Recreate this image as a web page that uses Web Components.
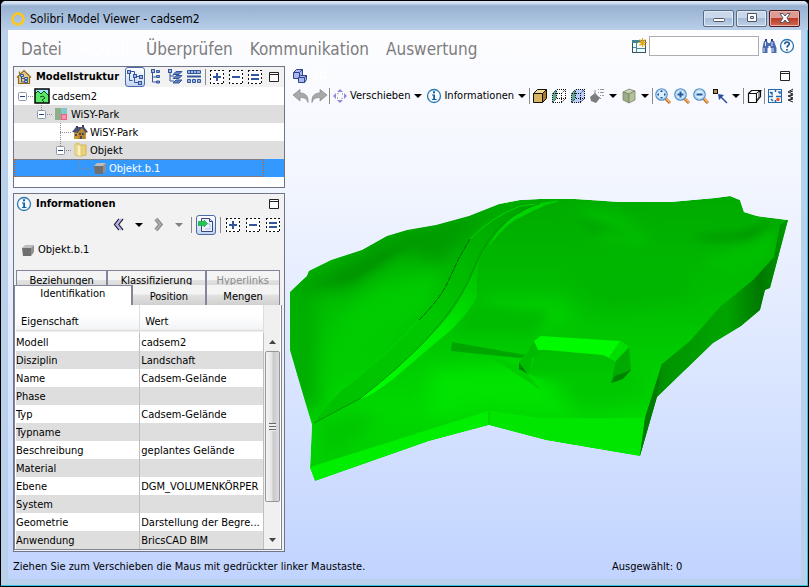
<!DOCTYPE html>
<html lang="de">
<head>
<meta charset="utf-8">
<title>Solibri Model Viewer - cadsem2</title>
<style>
html,body{margin:0;height:100%;background:#000}
body{font:11px/14px "DejaVu Sans Condensed","DejaVu Sans",sans-serif;color:#000}
</style>
</head>
<body>
<app-window></app-window>
<script>
const box = (inner) => `<rect x="1.5" y="1.5" width="13" height="13" fill="#fff" stroke="#111" stroke-dasharray="2 2" stroke-dashoffset="1" shape-rendering="crispEdges"/><g fill="#34569c">${inner}</g>`;
const lens = (inner) => `<path d="M10 10l5 5" stroke="#b86a2c" stroke-width="3"/><path d="M10.500 10l4.500 4.500" stroke="#ffb45c" stroke-width="1.500"/><circle cx="6.500" cy="6.500" r="5.700" fill="#d9efff" stroke="#5c93c6" stroke-width="1.300"/><circle cx="6.500" cy="6.500" r="4.400" fill="none" stroke="#a9d6f5"/><g fill="#27599a">${inner}</g>`;
const cube = (f, t, s, k) => `<g stroke="${k}" stroke-linejoin="round"><path d="M1.500 5.500h9v9h-9z" fill="${f}"/><path d="M1.500 5.500l4-4h9l-4 4z" fill="${t}"/><path d="M10.500 5.500l4-4v9l-4 4z" fill="${s}"/></g>`;
const dotted = (f) => `<path d="M1.500 5.500l4-4h9v9l-4 4h-9z" fill="${f}"/><path d="M1.500 5.500l4-4v9l-4 4z" fill="#5fa893"/><path d="M1.500 5.500h9v9h-9zM5.500 1.500h9v9h-9z" fill="none" stroke="#111" stroke-dasharray="1 1" shape-rendering="crispEdges"/><path d="M1.500 5.500l4-4M10.500 5.500l4-4M10.500 14.500l4-4M1.500 14.500l4-4" fill="none" stroke="#111" stroke-dasharray="1 1"/>`;
const info = `<circle cx="8" cy="8" r="6.500" fill="#f4faff" stroke="#2d78b0" stroke-width="1.300"/><path d="M6 6.500h3V11h1.500v1H6v-1h1.200V7.500H6zM7 3.200h2v2H7z" fill="#176099"/>`;
const node = (x, y) => `<rect x="${x}.500" y="${y}.500" width="3" height="3" fill="#9fb9e6" stroke="#34569c"/>`;
const greyCube = `<path d="M3 6l3-3h9l-3 3z" fill="#bdbdbd"/><path d="M12 6l3-3v7l-3 4z" fill="#909090"/><path d="M3 6h9v8H4z" fill="#6f6f6f"/>`;
const ICONS = {
 ring:`<circle cx="8" cy="8" r="5.500" fill="none" stroke="#ffc814" stroke-width="2.500"/>`,
 home:`<path d="M2 8l6-6 6 6v7H2z" fill="#e9cb82"/><path d="M1 8.500L8 1.500l7 7M2.500 8v6.500h11V8M3.500 5V2.500" fill="none" stroke="#8a6a20" stroke-width="1.200"/><path d="M5.500 6v7h3M5.500 9.500h3" fill="none" stroke="#34569c"/><path d="M4.500 5.500h3v2h-3zM8.500 8.500h3v2h-3zM8.500 11.500h3v2h-3z" fill="#b8d2f8" stroke="#34569c"/>`,
 tree1:`<path d="M2.500 4v7.500h3M4 2.500h3.500V6M7.500 8v5.500h4M9 7.500h4" fill="none" stroke="#34569c"/>${node(0,1)}${node(6,5)}${node(12,6)}${node(11,12)}`,
 tree2:`<path d="M4.500 4v9h4M4.500 8h4" fill="none" stroke="#34569c"/>${node(3,0)}<path d="M8.500 1.500h3v2h-3zM8.500 6.500h3v2h-3zM8.500 12h3v2h-3z" fill="#7b9bd4" stroke="#34569c"/>`,
 tree3:`<path d="M3 3v9h4M3 7h4" fill="none" stroke="#34569c"/>${node(1,0)}<path d="M6 5.500l3-3h6l-3 3zM6 9.500l3-3h6l-3 3zM6 14l3-3h6l-3 3z" fill="#6482b9" stroke="#34569c"/>`,
 rows:`<path d="M1.500 1.500h13v3h-13zM1.500 10.500h3v3h-3zM6.500 10.500h3v3h-3zM11.500 10.500h3v3h-3z" fill="#9db6e0" stroke="#34569c"/><path d="M1 7.500h14" stroke="#34569c" stroke-width="2"/><path d="M4.500 2v2M7.500 2v2M10.500 2v2" stroke="#34569c"/>`,
 plus:box(`<path d="M7 4h2v3h3v2H9v3H7V9H4V7h3z"/>`),
 minus:box(`<path d="M4 7h8v2H4z"/>`),
 equal:box(`<path d="M4 5h8v2H4zM4 9h8v2H4z"/>`),
 max:`<path d="M3.500 3.500h9v9h-9zM3 5.500h10" fill="#fff" stroke="#222"/>`,
 land:`<rect x="1" y="1" width="14" height="14" fill="#9ee8ff"/><path d="M1 6l3-3 3 3 3-3 5 5v7H1z" fill="#5be868"/><path d="M1 6l3-3 3 3 3-3 5 5M6 9l3-1 2 2-3 2 2 2" fill="none" stroke="#064d12"/><rect x="1" y="1" width="14" height="14" fill="none" stroke="#000" stroke-width="1.500"/>`,
 site:`<rect x="2" y="2" width="12" height="12" fill="#8fae8c"/><path d="M8 2h6v6H8z" fill="#7dcaca"/><path d="M8 8h6v6H8z" fill="#ff8faf"/><path d="M8.500 8.500h5v5h-5z" fill="none" stroke="#e42a5c" stroke-dasharray="1 1"/>`,
 house:`<path d="M2 7h12v8H2z" fill="#c79a34"/><path d="M0 8l4-5h8l4 5-3 1-3-4-4 4z" fill="#485070"/><path d="M6 8l4-4 3 4v7H6z" fill="#b5872a"/><path d="M3 10h2v2H3zM7 9h2v2H7zM10 9h2v2h-2zM8 12h2v3H8z" fill="#51485c"/><path d="M4 2h2v2H4zM10 1h2v2h-2z" fill="#394056"/>`,
 folder:`<path d="M3 2l4-1v13l-4-1z" fill="#f8e9a4" stroke="#d6bf6a"/><path d="M8 3h6v10l-6 1z" fill="#ebd27a" stroke="#cfb656"/><path d="M5 2l4 2v11l-4-2z" fill="#fdf3bd" stroke="#dbc673"/>`,
 obj:greyCube, info,
 back:`<path d="M8 2L3.500 7.500 8 13M12 2L7.500 7.500 12 13" fill="none" stroke="#20202c" stroke-width="1.300"/><path d="M10 2L5.500 7.500 10 13" fill="none" stroke="#b5b3ee" stroke-width="2"/>`,
 fwd:`<path d="M5 2l4.500 5.500L5 13" fill="none" stroke="#8a8a8a" stroke-width="4"/><path d="M5 2l4.500 5.500L5 13" fill="none" stroke="#b0b0b0" stroke-width="1.500"/>`,
 doc:`<path d="M3.500 14.500V1.500h8l3 3v10z" fill="#eef2ff" stroke="#39477a"/><path d="M11.500 1.500v3h3" stroke="#39477a" fill="#c6d0ff"/><path d="M9 7h3v5H7" stroke="#b4bde8" fill="none"/><path d="M0 4.500h6V3l3.500 3.500L6 10V8.500H0z" fill="#23c653" stroke="#0c9a40" stroke-width=".6"/>`,
 blocks:`<g fill="#aab6f2" stroke="#2e4589"><path d="M1.500 4.500l3-3h6v6l-3 3h-6zM1.500 4.500h6v6M7.500 4.500l3-3"/><path d="M6.500 9.500l2-2h6v4l-2 3h-6zM6.500 9.500h6v5M12.500 9.500l2-2"/></g>`,
 undo:`<path d="M0 7l7-5.500V5c6 0 8.500 3.500 8 9.500-1-3.500-3-5-8-5V13z" fill="#a8a8a8" stroke="#858585" stroke-width=".7"/>`,
 redo:`<path d="M16 7L9 1.500V5C3 5 .5 8.500 1 14.500c1-3.500 3-5 8-5V13z" fill="#a8a8a8" stroke="#858585" stroke-width=".7"/>`,
 move:`<path d="M8 1l3 3H5zM8 15l3-3H5zM1 8l3-3v6zM15 8l-3-3v6z" fill="#8b8ade"/><path d="M5.500 5.500h5v5h-5z" fill="none" stroke="#777" stroke-dasharray="1 4"/>`,
 cube:cube('#d9b566','#f3da94','#a77c32','#171208'),
 dot1:dotted('#fff'), dot2:dotted('#b9ceff'),
 paint:`<path d="M1 9l5-4 5 5-4 5-5-2z" fill="#7d7d7d"/><path d="M6 2v6M10 9l2 2" stroke="#888" fill="none"/><path d="M9 1.500h1m1 0h4M9 4.500h1m1 0h4M11 7.500h1m1 0h2" stroke="#999"/>`,
 green:`<g stroke="#78866a" stroke-width=".8"><path d="M2 4l6-3 6 2-6 3z" fill="#c8d3b0"/><path d="M2 4l6 2v9l-6-3z" fill="#9dad85"/><path d="M8 6l6-3v9l-6 3z" fill="#b3c299"/></g>`,
 fit:lens(`<path d="M6.500 2L8 4H5zM6.500 11L8 9H5zM2 6.500L4 5v3zM11 6.500L9 5v3z"/>`),
 zin:lens(`<path d="M5.500 3.500h2v2h2v2h-2v2h-2v-2h-2v-2h2z"/>`),
 zout:lens(`<path d="M3.500 5.500h6v2h-6z"/>`),
 pick:`<rect x="1.500" y="1.500" width="4" height="4" fill="#b4944e" stroke="#111"/><path d="M15 15L8 8" stroke="#2b4f9d" stroke-width="1.500"/><path d="M6 6l6 1-5 5z" fill="#2b4f9d"/>`,
 wire:`<path d="M2.500 5.500h8v9h-8zM2.500 5.500l3-3h9l-4 3M14.500 2.500v6l-4 5" fill="#fff" stroke="#111" stroke-width="1.200"/><path d="M11 5l2-2v6l-2 3" fill="#fff" stroke="#111" stroke-width=".8"/>`,
 plan:`<rect x="1.500" y="1.500" width="13" height="13" fill="#f4f8ff" stroke="#2768ad"/><path d="M1 8.500h5M9 8.500h6M8.500 1v3M8.500 12v3M3 4l2 2V4M11 4h2v2M4 11l2 2" fill="none" stroke="#2768ad" stroke-width="1.500"/><circle cx="11" cy="11.500" r="1.800" fill="#f05d26"/>`,
 coil:`<path d="M7 1L2 4l5 2-5 2 5 2-5 2 5 2M7 3L4 4M7 7L4 8M7 11l-3 1" stroke="#222" fill="none"/>`,
 layout:`<rect x="1.500" y="2.500" width="13" height="12" fill="#eefafa" stroke="#315362"/><path d="M1 2h9v3H1z" fill="#3f8796"/><path d="M5.500 5v9M2 9.500h3M6 10.500h8" stroke="#4d8b9a"/><path d="M11.500 0v9M7 4.500h9M8.500 1.500l6 6M14.500 1.500l-6 6" stroke="#e6a91b" stroke-width="1.200"/>`,
 find:`<path d="M3 3h3l1 2h2l1-2h3l2.500 7v5h-5v-5h-1v-2h-2v2h-1v5h-5v-5z" fill="#4c6cae"/><path d="M4 1h2v2H4zM10 1h2v2h-2z" fill="#213d7c"/><path d="M3 10v4M12 10v4M4.500 4v4M11 4v4" stroke="#d8e5ff"/>`,
 help:`<circle cx="8" cy="8" r="6.500" fill="#f8fcff" stroke="#2d78b0" stroke-width="1.300"/><path d="M5.800 6.200C5.800 3.200 10.500 3.400 10.300 6 10.200 7.500 8 7.500 8 9.500M8 11v1.600" fill="none" stroke="#174f88" stroke-width="1.600"/>`,
 caret:`<path d="M4 6h8l-4 4z" fill="currentColor"/>`
};
function define(name, css, html){
  const tpl = document.createElement('template');
  customElements.define(name, class extends HTMLElement{
    connectedCallback(){
      if (this.shadowRoot) return;
      tpl.innerHTML = `<style>*{box-sizing:border-box}button{font:inherit;color:inherit;margin:0;padding:0;border:0;background:none}${css}</style>${typeof html === 'function' ? html(this) : html}`;
      this.attachShadow({mode:'open'}).append(tpl.content.cloneNode(true));
    }
  });
}
define('ui-icon', ':host{display:block;flex:none;width:16px;height:16px}svg{display:block;width:100%;height:100%}',
  el => `<svg viewBox="0 0 16 16" aria-hidden="true">${ICONS[el.getAttribute('name')]}</svg>`);
define('tool-button', `:host{display:block;flex:none}button{display:flex;align-items:center;gap:2px;white-space:nowrap}
  :host([active]) button{padding:1px;border:1px solid #4a6ba5;border-radius:3px;background:linear-gradient(#fff,#c3d4f1)}`,
  el => `<button type="button" aria-label="${el.getAttribute('label')}"><ui-icon name="${el.getAttribute('icon')}"></ui-icon><slot></slot></button>`);
define('drop-arrow', ':host{display:block;flex:none;width:16px}button{display:block}', '<button type="button" aria-label="Auswahl"><ui-icon name="caret"></ui-icon></button>');
define('tool-sep', ':host{display:block;flex:none;width:1px;height:16px;background:#8a8a8a}', '');

define('window-button', `:host{display:block;width:31px;height:17px}
  button{display:grid;place-items:center;width:100%;height:100%;border:1px solid #5b6b82;border-radius:2px;background:linear-gradient(#c9d8eb 0 45%,#a5bcd8 50%,#bed1e7);box-shadow:inset 0 0 0 1px #e2ebf5}
  :host([kind=close]) button{border-color:#4e1a20;background:linear-gradient(#dd9c93 0 45%,#bd3b28 50%,#cf6a4e);box-shadow:inset 0 0 0 1px #e7b2a9}
  svg{display:block;width:14px;height:12px}`,
  el => { const k = el.getAttribute('kind');
    const p = {min:'<rect x="1.500" y="6.500" width="11" height="3" rx="1" fill="#fff" stroke="#535666"/>',
      max:'<path d="M2.500 1.500h9v8h-9zM5.500 4.500h3v2h-3z" fill="#fff" fill-rule="evenodd" stroke="#535666"/>',
      close:'<path d="M2 1.500h3l2 2.500 2-2.500h3L9 6l3 4.500H9L7 8l-2 2.500H2L5 6z" fill="#fff" stroke="#535666"/>'}[k];
    return `<button type="button" aria-label="${el.getAttribute('label')}"><svg viewBox="0 0 14 12">${p}</svg></button>`; });
define('title-bar', `:host{display:flex;align-items:center;height:30px;padding:2px 8px 0 9px;gap:4px;background:linear-gradient(#d4e2f2 0 2px,#97b1d1 5px,#bad0ea)}
  .t{flex:1;font:12px/16px "DejaVu Sans Condensed","DejaVu Sans",sans-serif;padding-top:3px}
  .b{display:flex;gap:2px;padding-top:2px}ui-icon{margin-top:4px}`,
  `<ui-icon name="ring"></ui-icon><span class="t">Solibri Model Viewer - cadsem2</span>
  <div class="b"><window-button kind="min" label="Minimieren"></window-button><window-button kind="max" label="Maximieren"></window-button><window-button kind="close" label="Schließen"></window-button></div>`);
define('menu-bar', `:host{display:flex;align-items:center;height:36px;padding:0 6px 0 13px}
  nav{display:flex;gap:17px;flex:1;font:17px/24px "DejaVu Sans Condensed","DejaVu Sans",sans-serif;color:#7d7d7d;padding-top:1px}
  a{color:inherit;text-decoration:none}.on{color:#fff}
  .s{display:flex;align-items:center;gap:2px;padding-bottom:4px}
  input{width:110px;height:20px;border:1px solid #abadb3;background:#fff;padding:0 3px;font:inherit}`,
  `<nav><a href="#d">Datei</a><a href="#m" class="on">Modell</a><a href="#u">Überprüfen</a><a href="#k">Kommunikation</a><a href="#a">Auswertung</a></nav>
  <div class="s"><tool-button icon="layout" label="Layout"></tool-button><input type="text" aria-label="Suche"><tool-button icon="find" label="Suchen"></tool-button><tool-button icon="help" label="Hilfe"></tool-button></div>`);

define('tool-panel', `:host{display:flex;flex-direction:column;border:1px solid #6f7487;background:#f2f2f2;min-height:0}
  header{display:flex;align-items:center;height:20px;padding:0 2px;gap:4px;flex:none}
  h2{margin:0;font:bold 11px/14px "DejaVu Sans Condensed","DejaVu Sans",sans-serif;flex:1;white-space:nowrap}
  .tools{display:flex;align-items:center;gap:3px}`,
  el => `<header><ui-icon name="${el.getAttribute('icon')}"></ui-icon><h2>${el.getAttribute('heading')}</h2><div class="tools"><slot name="tools"></slot><tool-button icon="max" label="Maximieren"></tool-button></div></header><slot></slot>`);
define('tree-row', `:host{display:flex;align-items:center;height:18px;background:#fff}
  :host([alt]){background:#dedede}
  :host([selected]){background:#3399ff;color:#fff}
  .f{flex:1;display:flex;align-items:center;height:18px;margin-right:20px}
  .f span{padding:1px 0 0 2px}
  :host([selected]) .f{outline:1px dotted #c86410;outline-offset:-1px}
  svg{display:block;flex:none;height:18px}`,
  el => { const d = +el.getAttribute('depth'), leaf = el.hasAttribute('leaf'), w = 20 + d * 19, x = 4 + d * 19;
    let s = `<g fill="none" stroke="#8a8a8a" stroke-dasharray="1 1">`;
    if (d) s += `<path d="M${x + 4.5} 0V${leaf && d === 2 ? 18 : 9}"/>`;
    s += `<path d="M${x + 4} 9.500H${w}"/></g>`;
    if (!leaf) s += `<rect x="${x + .5}" y="5.500" width="8" height="8" rx="1" fill="#fff" stroke="#8c98a8"/><path d="M${x + 2} 9.500h5" stroke="#24408c"/>`;
    return `<div class="f"><svg width="${w}" viewBox="0 0 ${w} 18">${s}</svg><ui-icon name="${el.getAttribute('icon')}"></ui-icon><span><slot></slot></span></div>`; });
define('tree-view', ':host{display:block;background:#fff;flex:1}',
  `<tree-row depth="0" icon="land">cadsem2</tree-row><tree-row depth="1" icon="site" alt>WiSY-Park</tree-row><tree-row depth="2" icon="house" leaf>WiSY-Park</tree-row><tree-row depth="2" icon="folder" alt>Objekt</tree-row><tree-row depth="3" icon="obj" leaf selected>Objekt.b.1</tree-row>`);

define('tab-strip', `:host{display:block;padding:0 4px 0 2px;flex:none}
  .r{display:grid;border:1px solid #83869a;border-width:1px 1px 0;gap:2px;background:#83869a}
  .a{grid-template-columns:90fr 97fr 73fr;height:15px;overflow:hidden}
  .b{grid-template-columns:117fr 73fr 72fr;height:20px;border-width:0 1px 1px 0;margin-left:-2px}
  button{height:100%;background:linear-gradient(#f4f4f4 0 45%,#e2e2e2 50%,#d0d0d0)}
  .a button{height:19px}.b button{padding-top:3px}
  .b .sel{height:20px;background:#fff;border:1px solid #83869a;border-width:1px 0 0 1px;padding:0 0 3px}
  [disabled]{color:#8c8c8c}`,
  `<div class="r a"><button>Beziehungen</button><button>Klassifizierung</button><button disabled>Hyperlinks</button></div>
  <div class="r b"><button class="sel">Identifikation</button><button>Position</button><button>Mengen</button></div>`);
const ROWS = [['Modell','cadsem2'],['Disziplin','Landschaft'],['Name','Cadsem-Gelände'],['Phase',''],['Typ','Cadsem-Gelände'],['Typname',''],['Beschreibung','geplantes Gelände'],['Material',''],['Ebene','DGM_VOLUMENKÖRPER'],['System',''],['Geometrie','Darstellung der Begre...'],['Anwendung','BricsCAD BIM']];
define('scroll-bar', `:host{display:flex;flex-direction:column;width:15px;background:#f0f0f0}
  button{height:18px;display:grid;place-items:center;color:#444}
  .track{flex:1}
  .thumb{height:84%;border:1px solid #969696;border-radius:2px;background:linear-gradient(90deg,#f6f6f6,#e4e4e4 45%,#c9c9cc 55%,#dcdcdf);display:grid;place-items:center}
  .grip{width:7px;height:8px;background:repeating-linear-gradient(#666 0 1px,#eee 1px 3px)}
  svg{display:block}`,
  `<button type="button" aria-label="Nach oben"><svg width="7" height="4"><path d="M0 4h7L3.500 0z" fill="currentColor"/></svg></button><div class="track"><div class="thumb"><div class="grip"></div></div></div><button type="button" aria-label="Nach unten"><svg width="7" height="4"><path d="M0 0h7L3.500 4z" fill="currentColor"/></svg></button>`);
define('property-table', `:host{display:flex;flex:1;min-height:0;border:1px solid #83869a;border-top:0;margin-right:2px;margin-bottom:1px;background:#fff;padding:0 1px}
  table{flex:1;border-collapse:collapse;table-layout:fixed;width:0;height:min-content}
  th{height:28px;font-weight:normal;text-align:left;padding:5px 5px 0;background:linear-gradient(#fff 0 10px,#f3f4f6 24px,#d8d8d8 26px,#fff 27px);border-right:1px solid #ddd}
  td{height:18px;padding:1px 0 0;white-space:nowrap;border-right:1px solid #bfbfbf;line-height:14px}
  td+td{padding-left:1px}tbody tr:nth-child(even){background:#dedede}
  .side{display:flex;flex-direction:column;padding:28px 0 0 1px;background:#f0f0f0}scroll-bar{flex:1}`,
  `<table><thead><tr><th>Eigenschaft</th><th>Wert</th></tr></thead><tbody>${ROWS.map(r => `<tr><td>${r[0]}</td><td>${r[1]}</td></tr>`).join('')}</tbody></table><div class="side"><scroll-bar></scroll-bar></div>`);
define('info-panel', `:host{display:flex;flex-direction:column;flex:1;min-height:0}
  .nav{display:flex;align-items:center;justify-content:flex-end;height:22px;gap:4px;padding-right:3px;flex:none}
  .grey{color:#808080}
  .obj{display:flex;align-items:center;gap:3px;height:27px;padding:0 5px;margin-bottom:7px;flex:none}`,
  `<div class="nav"><tool-button icon="back" label="Zurück"></tool-button><drop-arrow></drop-arrow><tool-button icon="fwd" label="Vorwärts"></tool-button><drop-arrow class="grey"></drop-arrow><tool-sep></tool-sep><tool-button icon="doc" active label="Automatisch"></tool-button><tool-sep></tool-sep><tool-button icon="plus" label="Hinzufügen"></tool-button><tool-button icon="minus" label="Entfernen"></tool-button><tool-button icon="equal" label="Setzen"></tool-button></div>
  <div class="obj"><ui-icon name="obj"></ui-icon><span>Objekt.b.1</span></div><tab-strip></tab-strip><property-table></property-table>`);

define('terrain-view', ':host{display:block;flex:1;min-height:0}svg{display:block;width:100%;height:100%}',
`<svg viewBox="286 107 515 448" role="img" aria-label="Geländemodell"><defs>
<path id="out" d="M290 292L307 276 309 271 331 260 362 250 387 236 407 230 436 225 469 216 499 204 520 200 540 199 575 199 620 202 670 202 715 198 730 196 740 200 744 212 757 216 788 220 770 288 765 290 760 310 741 326 713 343 657 397 640 456 546 440 489 425 429 441 315 481 310 468 312 425 290 350z"/>
<clipPath id="c"><use href="#out"/></clipPath>
<linearGradient id="base" x1="0" y1="0" x2="0" y2="1"><stop offset="0" stop-color="#00aa00"/><stop offset=".4" stop-color="#00c000"/><stop offset=".75" stop-color="#00d800"/><stop offset="1" stop-color="#00cc00"/></linearGradient>
<linearGradient id="side" x1="640" y1="0" x2="785" y2="0" gradientUnits="userSpaceOnUse"><stop offset="0" stop-color="#007c00"/><stop offset=".2" stop-color="#009600"/><stop offset=".6" stop-color="#00a400"/><stop offset=".83" stop-color="#007800"/><stop offset="1" stop-color="#009800"/></linearGradient>
<linearGradient id="road" x1="320" y1="420" x2="520" y2="205" gradientUnits="userSpaceOnUse"><stop offset="0" stop-color="#00c200"/><stop offset=".5" stop-color="#00c800"/><stop offset="1" stop-color="#00a400"/></linearGradient>
<linearGradient id="lit" x1="361" y1="400" x2="480" y2="270" gradientUnits="userSpaceOnUse"><stop offset="0" stop-color="#00ff00"/><stop offset=".6" stop-color="#00ec00"/><stop offset="1" stop-color="#00c000"/></linearGradient>
<linearGradient id="floor" x1="0" y1="350" x2="0" y2="384" gradientUnits="userSpaceOnUse"><stop offset="0" stop-color="#00c000"/><stop offset=".6" stop-color="#00c400"/><stop offset="1" stop-color="#00c800" stop-opacity="0"/></linearGradient>
<filter id="s" x="-50%" y="-50%" width="200%" height="200%"><feGaussianBlur stdDeviation="9"/></filter>
<filter id="s2" x="-50%" y="-50%" width="200%" height="200%"><feGaussianBlur stdDeviation="4"/></filter></defs>
<g clip-path="url(#c)"><use href="#out" fill="url(#base)"/>
<g filter="url(#s)"><path d="M285 250h30l5 170-35-30z" fill="#00ad00"/><path d="M290 290L380 235 500 205 440 265 400 250 350 290z" fill="#009c00"/><path d="M370 290L440 270 430 310 360 360 320 400 340 320z" fill="#00cc00"/><path d="M560 270L680 260 700 300 600 310z" fill="#00b600"/><path d="M430 370L520 365 560 395 570 410 480 405 430 420z" fill="#00e400"/><path d="M560 372L640 360 650 400 590 412 560 395z" fill="#00c800"/><path d="M315 430L350 410 380 420 330 460z" fill="#00c600"/><path d="M480 320L490 300 560 300 580 320 540 330z" fill="#00d000"/><path d="M570 205L620 215 650 240 600 235z" fill="#00c000"/></g>
<g filter="url(#s2)"><path d="M310 287L350 272 385 252 430 234 395 254 355 278z" fill="#009000"/><path d="M690 236L740 232 780 218 750 240 710 241z" fill="#009800"/><path d="M570 216L610 226 640 240 590 232z" fill="#00a400"/><path d="M700 262L775 232 770 258 735 280z" fill="#00be00"/><path d="M476 303L550 312 535 335 478 332 455 335z" fill="#00bc00"/><path d="M600 230L650 235 640 248 605 244z" fill="#00ba00"/></g>
<path d="M314 423Q330 400 346 387 365 372 386 353 405 337 419 320 434 303 446 285 455 268 470 239 493 218 516 206 528 201 560 201L540 204Q522 209 506 223 490 238 478 258 476 266 469 280 462 298 453 310 442 325 426 340 412 354 398 367L361 398 345 407z" fill="url(#road)"/>
<path d="M361 398L398 367 426 340Q442 325 453 310 464 294 472 275L479 262Q476 285 477 297 470 311 451 330 427 350 398 375 375 394 361 399z" fill="url(#lit)"/>
<path d="M506 223Q518 211 535 205L560 201 546 205Q530 212 515 220 500 230 488 248 493 235 506 223z" fill="#00d400"/>
<path d="M346 387Q390 352 419 320M470 239Q490 218 520 206L558 201" fill="none" stroke="#00d600" stroke-width="1"/>
<path d="M419 320Q437 302 446 286L459 258 470 239" fill="none" stroke="#006600" stroke-width="1" stroke-dasharray="6 1"/>
<path d="M314 423L361 398Q400 367 426 340 455 308 469 280 480 250 495 232 510 214 540 203" fill="none" stroke="#009400" stroke-width="1"/>
<path d="M452 342L526 355 521 358 451 351z" fill="#00a600"/><path d="M489 356L521 366 541 390z" fill="#00cc00"/><path d="M519 362L528 374 519 369z" fill="#008700"/>
<path d="M526 355L534 341 548 350 532 358 529 374 519 362z" fill="#00bc00"/>
<path d="M616 361L603 355 547 350 535 356 528 374 555 384 611 383z" fill="url(#floor)"/><path d="M534 341L541 336 573 338 620 341 629 347 616 361 603 355 547 350 538 350z" fill="#00fa00"/><path d="M620 341L629 347 616 361 609 357z" fill="#00de00"/>
<path d="M629 347L631 370 623 379 611 383 616 361z" fill="#00aa00"/><path d="M611 383L615 376 631 370 623 379z" fill="#008200"/>
<path d="M310 467L488 411 540 418 645 418 640 456 546 440 489 425 429 441 315 481z" fill="#00ee00"/><path d="M488 411L540 418 645 418 640 456 546 440 489 425z" fill="#00e600"/><path d="M489 412v13" stroke="#00c400"/>
<path d="M645 418L662 364 690 341 721 306 753 280 774 257 780 225 790 218 780 350 650 470 640 456z" fill="url(#side)"/><path d="M645 418L662 364 657 397 640 456z" fill="#007c00"/></g></svg>`);
define('model-viewer', `:host{display:flex;flex-direction:column;flex:1;min-width:0}
  .tab{display:flex;align-items:center;height:19px;padding:0 8px 0 6px;gap:4px;color:#fff;font-weight:bold}.tab span{flex:1}
  .bar{display:flex;align-items:center;height:22px;padding-left:7px;margin-right:6px;gap:3px;overflow:hidden}
  drop-arrow{margin:0 -3px}.bar>tool-sep{margin:0 -1px}.g{display:flex;align-items:center;gap:2px;margin-right:-1px}`,
  `<div class="tab"><ui-icon name="blocks"></ui-icon><span>3D</span><tool-button icon="max" label="Maximieren"></tool-button></div>
  <div class="bar"><div class="g"><tool-button icon="undo" label="Rückgängig"></tool-button><tool-button icon="redo" label="Wiederholen"></tool-button><tool-sep></tool-sep></div><tool-button icon="move" label="Verschieben">Verschieben</tool-button><drop-arrow></drop-arrow><tool-button icon="info" label="Informationen">Informationen</tool-button><drop-arrow></drop-arrow><tool-sep></tool-sep><tool-button icon="cube" label="Schattiert"></tool-button><tool-button icon="dot1" label="Drahtmodell"></tool-button><tool-button icon="dot2" label="Transparent"></tool-button><tool-button icon="paint" label="Färben"></tool-button><drop-arrow></drop-arrow><tool-button icon="green" label="Darstellung"></tool-button><drop-arrow></drop-arrow><tool-sep></tool-sep><tool-button icon="fit" label="Einpassen"></tool-button><tool-button icon="zin" label="Vergrößern"></tool-button><tool-button icon="zout" label="Verkleinern"></tool-button><tool-button icon="pick" label="Auswählen"></tool-button><drop-arrow></drop-arrow><tool-sep></tool-sep><tool-button icon="wire" label="Perspektive"></tool-button><tool-sep></tool-sep><tool-button icon="plan" label="Grundriss"></tool-button><tool-button icon="coil" label="Schnitt"></tool-button></div>
  <terrain-view></terrain-view>`);
define('status-bar', ':host{display:grid;grid-template-columns:599fr 189fr;align-items:center;height:24px;padding-left:5px}', '<span>Ziehen Sie zum Verschieben die Maus mit gedrückter linker Maustaste.</span><span>Ausgewählt: 0</span>');
define('app-window', `:host{display:flex;flex-direction:column;height:100vh;border:1px solid #000;border-radius:6px 6px 0 0;overflow:hidden;background:#b9d1ea;box-sizing:border-box}
  .frame{flex:1;display:flex;flex-direction:column;min-height:0;padding:0 6px 6px 7px;border:solid #39bfe0;border-width:0 1px 1px 0}
  .body{flex:1;display:flex;flex-direction:column;min-height:0;background:linear-gradient(#fdfdff,#f4f7ff 25%,#c1d4ff)}
  .main{flex:1;display:flex;min-height:0}
  .left{width:272px;margin-left:5px;margin-right:1px;padding-bottom:3px;display:flex;flex-direction:column;gap:5px;flex:none}
  .structure{height:122px;flex:none}.info{flex:1}
  title-bar{margin-bottom:-1px}`,
  `<title-bar></title-bar><div class="frame"><div class="body"><menu-bar></menu-bar><div class="main"><div class="left">
  <tool-panel class="structure" icon="home" heading="Modellstruktur"><tool-button slot="tools" icon="tree1" active label="Hierarchie"></tool-button><tool-button slot="tools" icon="tree2" label="Baum"></tool-button><tool-button slot="tools" icon="tree3" label="Ebenen"></tool-button><tool-button slot="tools" icon="rows" label="Liste"></tool-button><tool-sep slot="tools"></tool-sep><tool-button slot="tools" icon="plus" label="Hinzufügen"></tool-button><tool-button slot="tools" icon="minus" label="Entfernen"></tool-button><tool-button slot="tools" icon="equal" label="Setzen"></tool-button><tree-view></tree-view></tool-panel>
  <tool-panel class="info" icon="info" heading="Informationen"><info-panel></info-panel></tool-panel></div><model-viewer></model-viewer></div><status-bar></status-bar></div></div>`);
</script>
</body>
</html>
